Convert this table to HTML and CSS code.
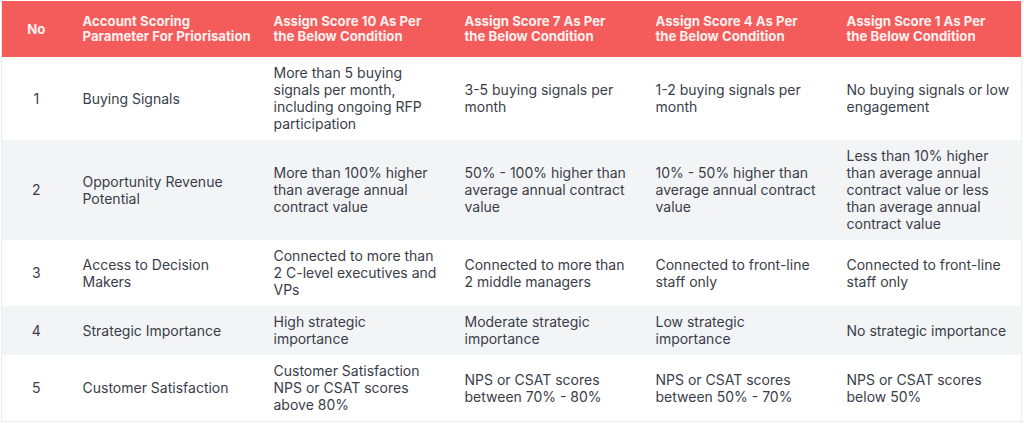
FILE: index.html
```html
<!DOCTYPE html>
<html>
<head>
<meta charset="utf-8">
<link rel="stylesheet" href="styles.css">
</head>
<body>
<table class="score">
  <colgroup>
    <col class="c-no">
    <col class="c-w"><col class="c-w"><col class="c-w"><col class="c-w"><col class="c-w">
  </colgroup>
  <thead>
    <tr>
      <th class="no">No</th>
      <th>Account Scoring<br>Parameter For Priorisation</th>
      <th>Assign Score 10 As Per<br>the Below Condition</th>
      <th>Assign Score 7 As Per<br>the Below Condition</th>
      <th>Assign Score 4 As Per<br>the Below Condition</th>
      <th>Assign Score 1 As Per<br>the Below Condition</th>
    </tr>
  </thead>
  <tbody>
    <tr>
      <td class="no">1</td>
      <td>Buying Signals</td>
      <td>More than 5 buying signals per month, including ongoing RFP participation</td>
      <td>3-5 buying signals per month</td>
      <td>1-2 buying signals per month</td>
      <td>No buying signals or low engagement</td>
    </tr>
    <tr class="alt">
      <td class="no">2</td>
      <td>Opportunity Revenue Potential</td>
      <td>More than 100% higher than average annual contract value</td>
      <td>50% - 100% higher than average annual contract value</td>
      <td>10% - 50% higher than average annual contract value</td>
      <td>Less than 10% higher than average annual contract value or less than average annual contract value</td>
    </tr>
    <tr>
      <td class="no">3</td>
      <td>Access to Decision Makers</td>
      <td>Connected to more than 2 C-level executives and VPs</td>
      <td>Connected to more than 2 middle managers</td>
      <td>Connected to front-line staff only</td>
      <td>Connected to front-line staff only</td>
    </tr>
    <tr class="alt">
      <td class="no">4</td>
      <td>Strategic Importance</td>
      <td>High strategic importance</td>
      <td>Moderate strategic importance</td>
      <td>Low strategic importance</td>
      <td>No strategic importance</td>
    </tr>
    <tr>
      <td class="no">5</td>
      <td>Customer Satisfaction</td>
      <td>Customer Satisfaction NPS or CSAT scores above 80%</td>
      <td>NPS or CSAT scores between 70% - 80%</td>
      <td>NPS or CSAT scores between 50% - 70%</td>
      <td>NPS or CSAT scores below 50%</td>
    </tr>
  </tbody>
</table>
</body>
</html>
```
FILE: styles.css
```css
html, body {
  margin: 0;
  padding: 0;
  background: #ffffff;
}
body {
  padding: 1px;
  font-family: Inter, "Noto Sans", sans-serif;
}
.score {
  width: 1020px;
  table-layout: fixed;
  border-collapse: collapse;
  border: 1px solid #ededed;
  border-top: none;
}
.c-no { width: 65px; }
.c-w { width: 191px; }
.score th {
  background: #f45c5b;
  color: #fdf0ee;
  font-size: 13.2px;
  font-weight: 700;
  line-height: 15px;
  text-align: left;
  white-space: nowrap;
  padding: 13px 0 13px 16px;
  vertical-align: middle;
}
.score th.no {
  text-align: center;
  padding-left: 4px;
  padding-right: 0;
}
.score td {
  font-size: 14px;
  line-height: 17px;
  color: #3a3d48;
  padding: 7px 10px 8px 16px;
  vertical-align: middle;
  background: #ffffff;
}
.score td.no {
  text-align: center;
  padding-left: 4px;
  padding-right: 0;
}
.score tr.alt td {
  background: #f3f4f6;
}
```
